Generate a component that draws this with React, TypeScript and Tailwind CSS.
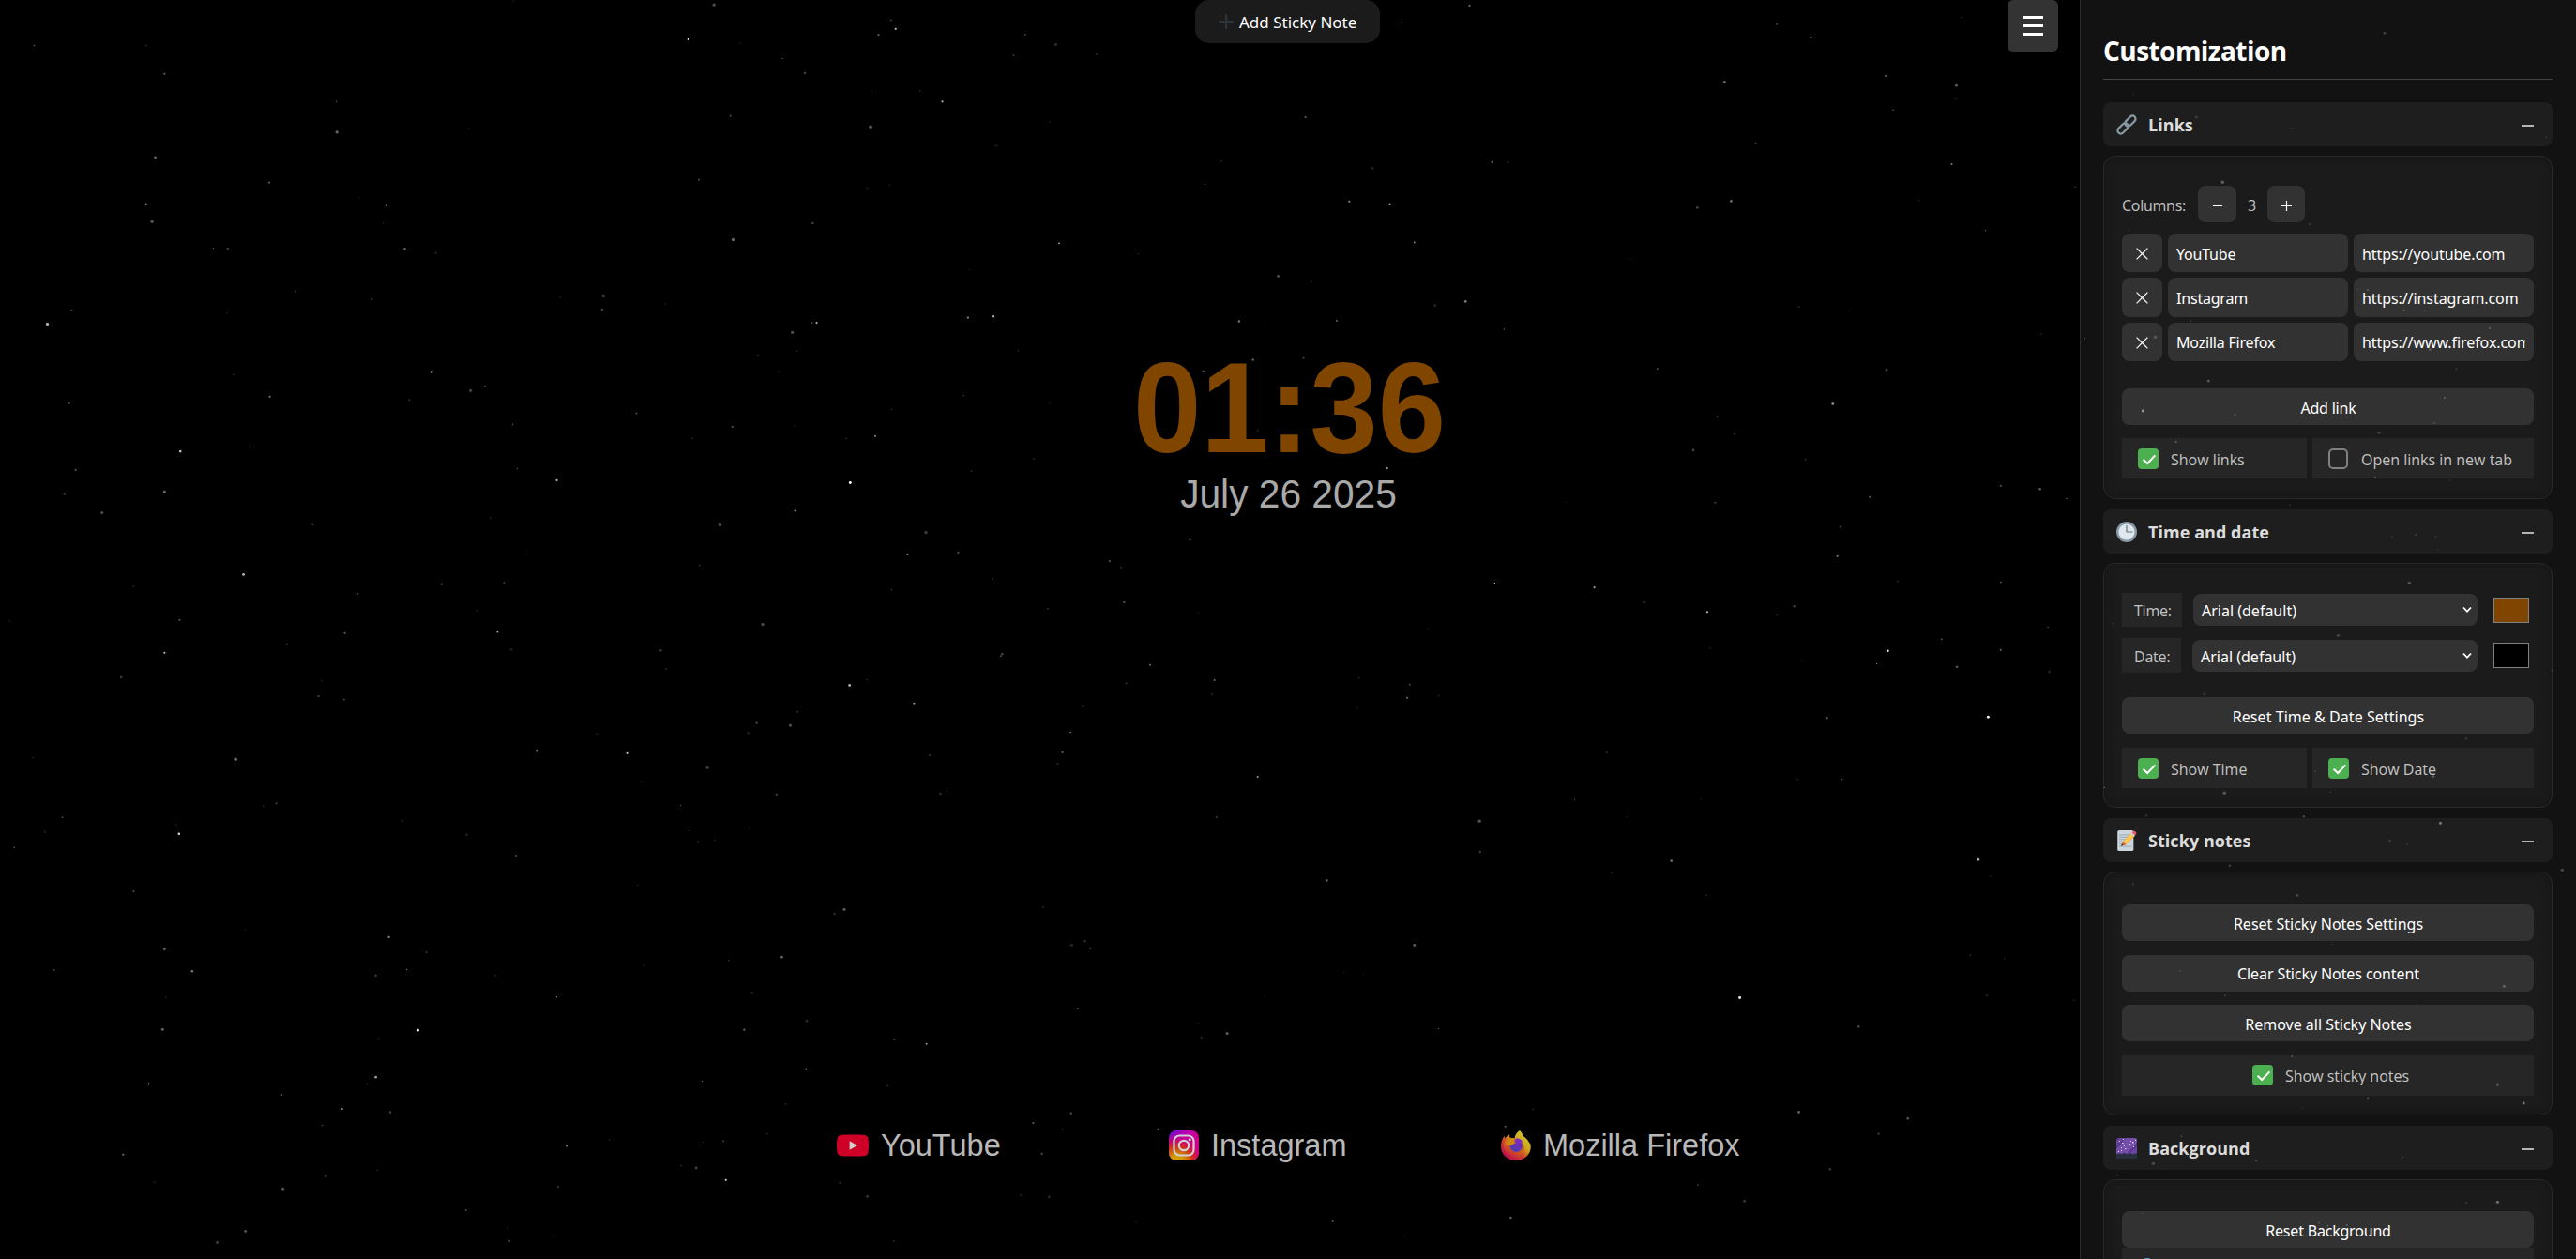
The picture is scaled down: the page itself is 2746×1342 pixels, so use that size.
import type { ReactNode } from "react";

/* ---------- Starfield ---------- */

type Star = [x: number, y: number, size: number, alpha: number];
type Tile = { x: number; y: number; sx: number; sy: number; stars: Star[] };

const TILES: Tile[] = [
  {
    x: 0, y: 0, sx: 0.7015, sy: 0.428,
    stars: [
      [1085, 12, 3, 0.3], [780, 3, 1, 0.3], [1354, 50, 1.5, 0.3], [1361, 72, 2, 0.75], [1335, 87, 2, 0.35], [1558, 86, 1.5, 0.35],
      [1046, 98, 2, 0.9], [1125, 108, 1, 0.3], [1540, 138, 1.5, 0.3], [52, 113, 1.5, 0.35], [222, 113, 1.5, 0.2], [1189, 146, 1, 0.5],
      [250, 184, 2, 0.4], [1223, 182, 2, 0.3], [1325, 225, 1, 0.25], [1398, 226, 1.5, 0.2], [511, 253, 1.5, 0.3], [1432, 253, 2, 0.7],
      [1110, 289, 2, 0.25], [1323, 316, 3, 0.4], [512, 329, 3, 0.4], [713, 321, 1, 0.2], [1514, 363, 3, 0.08], [236, 392, 2.5, 0.4],
      [409, 455, 2, 0.35], [1062, 448, 2, 0.25], [1318, 468, 2, 0.12], [1352, 461, 1.5, 0.15], [546, 493, 1, 0.2], [222, 508, 1.5, 0.55],
      [587, 511, 2, 0.8], [582, 556, 1, 0.35], [231, 552, 3, 0.33], [1235, 556, 2, 0.3], [1114, 597, 3, 0.38], [324, 618, 1, 0.5],
      [346, 619, 2.2, 0.25], [615, 620, 2.5, 0.38], [662, 630, 1.5, 0.22], [1473, 672, 1, 0.2], [449, 726, 2, 0.2], [565, 745, 2, 0.2],
      [917, 737, 3, 0.25], [851, 740, 1.5, 0.14], [915, 771, 2, 0.3], [1011, 757, 1, 0.35], [109, 773, 2, 0.28], [72, 807, 2.8, 0.7],
      [345, 779, 1, 0.25], [1471, 791, 2, 0.55], [1509, 788, 2.6, 0.75], [1241, 804, 2, 0.65], [1234, 804, 2, 0.22], [1204, 828, 3, 0.3],
      [1547, 873, 1, 0.3], [1210, 874, 2, 0.2], [1152, 885, 2.5, 0.1], [656, 926, 3, 0.42], [1185, 925, 1.5, 0.45], [355, 933, 1, 0.4],
      [715, 973, 3, 0.25], [737, 962, 1.8, 0.28], [410, 988, 2, 0.45], [622, 996, 1.5, 0.25], [105, 1004, 2, 0.32], [1464, 985, 1, 0.4],
      [967, 1029, 1.5, 0.4], [1355, 1020, 1, 0.3], [779, 1057, 1.5, 0.28], [1113, 1063, 2, 0.3], [1207, 1060, 1, 0.2], [1330, 1086, 2, 0.5],
      [1052, 1092, 1.2, 0.28], [1286, 1092, 1, 0.3], [380, 1109, 1.2, 0.45], [274, 1124, 2.4, 0.75], [115, 1170, 2, 0.35], [786, 1167, 1.2, 0.3],
      [846, 1196, 2, 0.7], [1476, 1173, 2, 0.13], [1292, 1202, 2.6, 1], [98, 1230, 2.6, 0.16], [250, 1225, 2.6, 0.42], [155, 1277, 2.8, 0.3],
      [1208, 1272, 1.5, 0.55], [746, 1290, 2, 0.12], [475, 1307, 1.2, 0.35], [1094, 1307, 2.8, 0.35], [1407, 1326, 3, 0.24], [800, 1380, 1, 0.35],
      [1379, 1381, 2, 0.5], [1456, 1376, 2, 0.3], [1063, 1408, 1.5, 0.22], [370, 1431, 2.4, 0.75], [203, 1460, 2, 0.12], [671, 1455, 2, 0.3],
      [766, 1451, 1.6, 0.3], [544, 1478, 1.5, 0.28], [1355, 1469, 1, 0.45], [1508, 1441, 1.5, 0.22], [725, 1521, 2, 0.14], [273, 1544, 2, 0.32],
      [1159, 1555, 3, 0.28], [15, 1546, 1, 0.25],
    ],
  },
  {
    x: 0, y: 671, sx: 0.7015, sy: 0.428,
    stars: [
      [524, 9, 2, 0.35], [756, 6, 1.6, 0.7], [436, 37, 2, 0.18], [777, 50, 2.6, 0.13], [1004, 52, 2.4, 0.22], [250, 58, 2, 0.7],
      [1523, 61, 2, 0.35], [1521, 66, 1.6, 0.35], [184, 119, 2.4, 0.22], [489, 127, 1, 0.3], [1012, 98, 1.2, 0.35], [1317, 125, 1, 0.35],
      [1291, 139, 2.6, 0.65], [484, 166, 2, 0.28], [523, 174, 1.5, 0.35], [1389, 184, 2, 0.55], [1212, 205, 1.2, 0.35], [1150, 233, 2, 0.3],
      [1201, 239, 2.6, 0.32], [907, 260, 1, 0.32], [1137, 258, 2.4, 0.12], [816, 302, 2.5, 0.4], [953, 308, 2, 0.75], [1413, 313, 1.5, 0.28],
      [358, 323, 3, 0.45], [50, 319, 1, 0.35], [1075, 344, 3, 0.22], [975, 378, 1.2, 0.35], [1439, 396, 1.2, 0.45], [1429, 409, 2, 0.22],
      [1180, 411, 2, 0.25], [420, 433, 1.8, 0.28], [400, 440, 1.4, 0.2], [1034, 438, 1, 0.45], [95, 468, 1.8, 0.28], [68, 504, 2, 0.14],
      [268, 485, 1, 0.25], [272, 509, 2.2, 0.9], [611, 476, 2, 0.16], [709, 511, 2, 0.18], [1139, 493, 1.5, 0.28], [1047, 501, 1.2, 0.25],
      [1061, 529, 2, 0.14], [1086, 525, 2, 0.1], [22, 543, 1.4, 0.35], [784, 563, 1.8, 0.3], [969, 637, 1.2, 0.22], [203, 652, 1.8, 0.33],
      [1283, 697, 3, 0.33], [1268, 708, 1.8, 0.25], [372, 749, 1, 0.2], [591, 766, 2.1, 0.55], [250, 796, 2.6, 0.36], [648, 804, 2, 0.2],
      [82, 848, 2, 0.25], [292, 851, 2.3, 0.48], [571, 862, 2, 0.28], [618, 847, 1.2, 0.45], [753, 862, 1.2, 0.3], [1188, 816, 2.6, 0.36],
      [1107, 824, 1.4, 0.25], [979, 836, 1.8, 0.13], [846, 915, 1.3, 0.6], [252, 917, 2, 0.1], [1143, 904, 1.6, 0.18], [1226, 975, 2.6, 0.15],
      [247, 996, 2.8, 0.36], [635, 998, 2.6, 0.95], [1131, 997, 2, 0.42], [575, 1020, 2.4, 0.08], [1359, 1021, 2, 0.25], [1408, 1032, 1.8, 0.6],
      [1225, 1095, 1.8, 0.5], [571, 1115, 2.5, 0.6], [558, 1132, 2, 0.1], [226, 1130, 1.2, 0.5], [1067, 1125, 1.1, 0.5], [1349, 1135, 1.8, 0.3],
      [428, 1159, 1.3, 0.45], [1194, 1182, 2, 0.13], [520, 1194, 2, 0.5], [593, 1202, 2.2, 0.25], [490, 1235, 1.5, 0.28], [1166, 1255, 1.3, 0.25],
      [926, 1272, 1.2, 0.2], [1068, 1277, 1, 0.3], [1099, 1274, 2, 0.22], [861, 1286, 2, 0.45], [187, 1308, 2.2, 0.33], [1035, 1335, 1, 0.35],
      [1058, 1341, 2.6, 0.25], [573, 1347, 1, 0.3], [495, 1361, 2.6, 0.28], [1103, 1371, 2, 0.8], [235, 1377, 2.4, 0.08], [1276, 1378, 1.4, 0.28],
      [848, 1388, 1.8, 0.25], [430, 1393, 2.6, 0.33], [1318, 1412, 2.4, 0.22], [1551, 1409, 1.4, 0.25], [708, 1446, 1.8, 0.3], [373, 1499, 2.6, 0.33],
      [771, 1491, 1.8, 0.13], [841, 1508, 1, 0.2], [330, 1527, 2.6, 0.25], [774, 1523, 1.8, 0.3], [1358, 1523, 1.2, 0.35],
    ],
  },
  {
    x: 1100, y: 0, sx: 0.7079, sy: 0.428,
    stars: [
      [659, 14, 2, 0.4], [557, 56, 1.2, 0.4], [1122, 60, 1.6, 0.32], [1173, 93, 2, 0.4], [1400, 43, 1, 0.32], [36, 111, 2.4, 0.22],
      [97, 135, 2, 0.14], [1043, 204, 2.5, 0.4], [1286, 189, 2, 0.4], [1392, 213, 2.6, 0.35], [1391, 245, 2, 0.12], [1297, 274, 1.3, 0.4],
      [412, 292, 1.8, 0.38], [27, 304, 1, 0.28], [1090, 356, 1.6, 0.28], [285, 401, 1.2, 0.28], [693, 404, 2, 0.35], [717, 404, 1.8, 0.25],
      [1385, 409, 1.9, 0.5], [513, 419, 2.5, 0.15], [261, 459, 1.2, 0.32], [478, 502, 2, 0.5], [539, 508, 1.8, 0.6], [1053, 501, 2.5, 0.42],
      [1002, 517, 2.5, 0.25], [1335, 499, 1, 0.28], [1436, 574, 1.2, 0.4], [41, 606, 1.4, 0.85], [576, 604, 1.7, 0.5], [160, 632, 1, 0.3],
      [899, 644, 1.2, 0.48], [371, 688, 2.5, 0.32], [421, 701, 1.5, 0.28], [653, 751, 2.5, 0.48], [607, 761, 2, 0.22], [1155, 764, 1.7, 0.16],
      [1229, 774, 1, 0.25], [312, 800, 2.2, 0.45], [459, 799, 2, 0.32], [351, 811, 1, 0.3], [711, 820, 1.4, 0.38], [1520, 831, 1.1, 0.32],
      [409, 892, 1.7, 0.28], [333, 896, 2.3, 0.36], [258, 925, 2, 0.4], [942, 918, 1.8, 0.3], [1287, 921, 2.4, 0.25], [27, 1003, 1, 0.3],
      [1206, 1006, 2.6, 0.5], [1032, 1038, 1.8, 0.25], [340, 1072, 1.8, 0.14], [1058, 1081, 1, 0.5], [996, 1121, 2.4, 0.28], [3, 1142, 2, 0.13],
      [1165, 1144, 1.2, 0.3], [535, 1166, 2, 0.6], [1459, 1210, 2, 0.28], [1518, 1218, 2.2, 0.38], [1262, 1238, 2, 0.36], [1029, 1252, 1.8, 0.28],
      [1558, 1242, 1, 0.35], [804, 1252, 1, 0.2], [1217, 1312, 1.5, 0.3], [238, 1344, 2.4, 0.18], [1213, 1385, 2, 0.48], [117, 1397, 2, 0.3],
      [134, 1413, 1.8, 0.18], [212, 1417, 1, 0.15], [697, 1452, 1.3, 0.7], [847, 1463, 2, 0.6], [1459, 1450, 1.6, 0.35], [1304, 1448, 1.4, 0.22],
      [139, 1500, 2, 0.36], [922, 1500, 2, 0.36], [24, 1516, 1.4, 0.25], [250, 1526, 1.2, 0.2], [1017, 1524, 2, 0.7], [1148, 1510, 2.2, 0.25],
      [1122, 1532, 1, 0.4], [1530, 1562, 1.1, 0.45], [597, 1566, 1.2, 0.2],
    ],
  },
  {
    x: 1100, y: 671, sx: 0.7079, sy: 0.428,
    stars: [
      [1289, 53, 2.2, 0.9], [1370, 24, 1.6, 0.35], [1459, 51, 2, 0.36], [1393, 93, 2.4, 0.33], [1532, 105, 2, 0.2], [1272, 85, 1, 0.5],
      [1159, 77, 1.6, 0.13], [1021, 46, 1.8, 0.12], [178, 88, 1.7, 0.48], [275, 126, 2, 0.36], [142, 134, 1.6, 0.25], [271, 161, 2, 0.14],
      [492, 121, 1, 0.4], [569, 137, 1.6, 0.32], [565, 170, 2, 0.38], [613, 164, 1, 0.35], [77, 191, 2, 0.18], [490, 195, 1.2, 0.15],
      [1197, 220, 2.5, 0.28], [1440, 218, 2.6, 0.95], [58, 256, 1.3, 0.6], [46, 306, 2, 0.36], [39, 334, 1.8, 0.18], [866, 306, 1.5, 0.28],
      [340, 367, 2, 0.55], [1153, 373, 1, 0.3], [1220, 373, 1.3, 0.38], [817, 424, 1.2, 0.32], [1007, 422, 1.2, 0.15], [278, 467, 2, 0.2],
      [674, 477, 3, 0.33], [896, 466, 1, 0.22], [675, 554, 2.4, 0.2], [963, 576, 2.5, 0.42], [1425, 573, 2.6, 0.65], [444, 625, 2.5, 0.35],
      [873, 605, 1.7, 0.15], [1443, 614, 1.8, 0.1], [1015, 661, 1.8, 0.14], [17, 691, 1.8, 0.15], [80, 776, 2.2, 0.18], [60, 786, 2.5, 0.18],
      [88, 794, 2, 0.18], [576, 786, 2.5, 0.38], [1413, 811, 1, 0.4], [1464, 819, 1, 0.3], [470, 854, 1, 0.2], [499, 859, 1, 0.14],
      [1066, 917, 2.6, 0.95], [1438, 912, 1, 0.45], [69, 944, 1.7, 0.32], [350, 912, 1.2, 0.14], [250, 981, 1.5, 0.15], [294, 1006, 3, 0.33],
      [255, 1016, 2, 0.18], [612, 994, 1, 0.5], [1245, 989, 2, 0.38], [755, 1195, 1.3, 0.22], [1155, 1202, 2.5, 0.4], [1319, 1218, 2.4, 0.33],
      [59, 1205, 2, 0.32], [2, 1229, 2, 0.35], [46, 1245, 1.2, 0.28], [190, 1245, 2, 0.36], [713, 1238, 2, 0.32], [1275, 1256, 2, 0.28],
      [15, 1306, 2, 0.3], [1202, 1344, 2.4, 0.22], [1003, 1383, 1.8, 0.22], [26, 1413, 2.2, 0.18], [1073, 1424, 2.5, 0.22], [721, 1465, 2.3, 0.36],
      [453, 1473, 2.3, 0.42], [157, 1476, 1, 0.28], [561, 1511, 1, 0.22],
    ],
  },
  {
    x: 2200, y: 0, sx: 0.3482, sy: 0.3333,
    stars: [
      [982, 106, 2.4, 0.22], [213, 301, 1, 0.15], [406, 375, 2.6, 0.14], [699, 409, 1, 0.2], [1477, 439, 1.2, 0.25], [486, 583, 3.2, 0.3],
      [35, 598, 1.2, 0.4], [755, 717, 2.4, 0.2], [199, 736, 1, 0.25], [356, 420, 2, 0.2],
    ],
  },
  {
    x: 2200, y: 270, sx: 0.3482, sy: 0.3333,
    stars: [
      [930, 117, 2, 0.2], [900, 115, 1, 0.2], [1042, 183, 2, 0.26], [1106, 184, 2, 0.13], [389, 216, 1.4, 0.22], [1304, 240, 2, 0.2],
      [64, 272, 1.6, 0.25], [280, 268, 3, 0.2], [1121, 308, 2.6, 0.18], [1202, 370, 2.4, 0.08], [443, 408, 2.8, 0.25], [242, 504, 2.6, 0.5],
      [1166, 462, 2, 0.22], [525, 516, 2, 0.16], [1135, 543, 2.4, 0.1], [965, 574, 2.4, 0.2], [344, 603, 1.8, 0.28], [953, 717, 1.8, 0.28],
      [1183, 726, 1.8, 0.08], [692, 806, 2, 0.1], [9, 784, 1, 0.4],
    ],
  },
  {
    x: 2200, y: 540, sx: 0.3482, sy: 0.3333,
    stars: [
      [1005, 96, 2, 0.1], [1077, 90, 2, 0.12], [1139, 96, 2, 0.13], [1146, 138, 2, 0.06], [1058, 244, 3, 0.25], [151, 373, 1, 0.25],
      [840, 412, 2.8, 0.18], [430, 600, 2.6, 0.12], [447, 505, 2, 0.1], [1232, 742, 2.4, 0.12], [770, 847, 2, 0.1], [1132, 863, 2, 0.3],
      [492, 916, 3.2, 0.25], [817, 913, 1, 0.3], [1494, 523, 1, 0.4], [124, 898, 1.2, 0.45],
    ],
  },
  {
    x: 2200, y: 860, sx: 0.3482, sy: 0.3333,
    stars: [
      [1153, 52, 2.8, 0.38], [735, 31, 2.2, 0.22], [253, 28, 2.2, 0.12], [998, 109, 2.4, 0.14], [1051, 120, 2, 0.1], [508, 188, 2.2, 0.2],
      [1526, 202, 3, 0.22], [212, 247, 1.6, 0.2], [715, 283, 2.4, 0.2], [819, 439, 1.2, 0.16], [356, 525, 2, 0.1], [1348, 574, 3, 0.22],
      [494, 604, 2, 0.16], [1083, 631, 1.4, 0.1], [699, 798, 1.5, 0.3], [1328, 889, 3, 0.22], [931, 931, 1.3, 0.4], [1408, 948, 2.6, 0.4],
      [730, 964, 1, 0.2], [32, 619, 1, 0.35],
    ],
  },
  {
    x: 2200, y: 1180, sx: 0.3482, sy: 0.3333,
    stars: [
      [360, 94, 1.2, 0.35], [274, 181, 3, 0.2], [589, 171, 2.2, 0.2], [1038, 160, 1.2, 0.25], [165, 217, 1.2, 0.2], [1232, 306, 2.2, 0.1],
      [1328, 304, 3, 0.35], [243, 340, 2, 0.08], [781, 371, 2, 0.15], [808, 380, 1.5, 0.25], [867, 378, 2, 0.2],
    ],
  },
];

function Starfield() {
  return (
    <svg className="pointer-events-none absolute inset-0" width="2746" height="1342" viewBox="0 0 2746 1342" aria-hidden="true">
      {TILES.map((t, i) =>
        t.stars.map(([x, y, s, a], j) => (
          <circle key={i + "-" + j} cx={t.x + x * t.sx} cy={t.y + y * t.sy} r={s * 0.56} fill="#fff" fillOpacity={a} />
        )),
      )}
    </svg>
  );
}

/* ---------- Icons ---------- */

function LinkIcon() {
  return (
    <svg className="h-[22px] w-[22px]" viewBox="0 0 22 22" fill="none" stroke="#8899a6" strokeWidth="2.200">
      <rect x="-6.600" y="-3.300" width="13.200" height="6.600" rx="3.300" transform="translate(7.1 14.9) rotate(-45)" />
      <rect x="-6.600" y="-3.300" width="13.200" height="6.600" rx="3.300" transform="translate(14.9 7.1) rotate(-45)" />
    </svg>
  );
}

function ClockIcon() {
  return (
    <svg className="h-[22px] w-[22px]" viewBox="0 0 36 36">
      <circle cx="18" cy="18" r="18" fill="#8899a6" />
      <circle cx="18" cy="18" r="14" fill="#e1e8ed" />
      <path d="M18 7v11h10" fill="none" stroke="#66757f" strokeWidth="2" strokeLinecap="round" strokeLinejoin="round" />
    </svg>
  );
}

function MemoIcon() {
  return (
    <svg className="h-[22px] w-[22px]" viewBox="0 0 36 36">
      <rect x="2" y="0" width="28" height="36" rx="3" fill="#ccd6dd" />
      <path d="M5 8h20M5 12h17M5 16h13M5 20h10M5 24h9M5 28h22" stroke="#99aab5" strokeWidth="1.600" />
      <path d="M8.500 27.500l3-8L26.500 4.500l5.500 5.500L17 25z" fill="#ffac33" />
      <path d="M10.500 22l15-15 3.500 3.500-14.500 14.500z" fill="#ffcc4d" />
      <path d="M8.500 27.500l3-8 5.500 5.500z" fill="#c1694f" />
      <path d="M8.500 27.500l1.300-3.600 2.400 2.400z" fill="#292f33" />
      <path d="M25 6l2.500-2.500 5.500 5.500-2.500 2.500z" fill="#ccd6dd" />
      <path d="M27.200 3.800l2-2c1-1 2.500-1 3.500 0l1.500 1.500c1 1 1 2.500 0 3.500l-2 2z" fill="#ea596e" />
    </svg>
  );
}

function GalaxyIcon() {
  return (
    <svg className="h-[22px] w-[22px]" viewBox="0 0 22 22">
      <rect width="22" height="22" rx="2.200" fill="#553788" />
      <path d="M10 0h10q2 0 2 2v3L11 17H0v-5z" fill="#744eaa" />
      <path d="M4 0h5L0 8V3z" fill="#6a45a0" />
      <path d="M22 9v8h-9z" fill="#6a45a0" />
      <g fill="#e6d8f5">
        <rect x="7" y="1" width="1" height="1" /><rect x="3" y="3" width="1" height="1" /><rect x="6" y="5" width="1.500" height="1" />
        <rect x="12" y="7" width="1.500" height="1" /><rect x="14" y="6" width="1" height="1" /><rect x="17" y="4" width="1.500" height="1.500" />
        <rect x="20" y="2" width="1" height="1" /><rect x="15" y="3" width="1" height="1" /><rect x="5" y="13" width="1" height="1" />
        <rect x="2" y="14" width="1" height="1" /><rect x="18" y="9" width="1" height="1" /><rect x="13" y="10" width="1" height="1" />
        <rect x="8" y="8" width="1" height="1" /><rect x="5" y="10" width="1" height="1" /><rect x="9" y="11" width="1.500" height="1" />
      </g>
      <path d="M0 17.500l3-1.300 2.500 1 3-1.500 3 1.800 3.500-1.300 3 1 4-1.200v3.800q0 2.200-2.200 2.200H2.200Q0 22 0 19.800z" fill="#292f3f" />
    </svg>
  );
}

function YouTubeIcon() {
  return (
    <svg className="h-[24px] w-[34px]" viewBox="0 0 34 24">
      <path d="M17 .5c-5 0-10.500.1-13 .6C1.900 1.500.9 2.700.6 4.500.2 6.700 0 9 0 12s.2 5.300.6 7.500c.3 1.800 1.300 3 3.400 3.400 2.500.5 8 .6 13 .6s10.500-.1 13-.6c2.100-.4 3.100-1.600 3.400-3.400.4-2.200.6-4.500.6-7.500s-.2-5.300-.6-7.500c-.3-1.800-1.300-3-3.400-3.400-2.500-.5-8-.6-13-.6z" fill="#cf0027" />
      <path d="M13.600 7.200v9.600l8.400-4.800z" fill="#d0d0d0" />
    </svg>
  );
}

function InstagramIcon() {
  return (
    <svg className="h-8 w-8" viewBox="0 0 32 32">
      <defs>
        <linearGradient id="igBase" x1="0" y1="0" x2="1" y2="0.300">
          <stop offset="0" stopColor="#5a17d0" /><stop offset="0.450" stopColor="#b300b8" /><stop offset="1" stopColor="#cf0088" />
        </linearGradient>
        <radialGradient id="igWarm" cx="0.270" cy="1.080" r="1">
          <stop offset="0" stopColor="#d0ac00" /><stop offset="0.250" stopColor="#d09a00" /><stop offset="0.550" stopColor="#d0301e" /><stop offset="0.780" stopColor="#cf0078" stopOpacity="0.800" /><stop offset="1" stopColor="#cf0090" stopOpacity="0" />
        </radialGradient>
      </defs>
      <rect width="32" height="32" rx="8" fill="url(#igBase)" />
      <rect width="32" height="32" rx="8" fill="url(#igWarm)" />
      <rect x="5.500" y="5.500" width="21" height="21" rx="6" fill="none" stroke="#d3d0d3" strokeWidth="2.200" />
      <circle cx="16" cy="16" r="5.200" fill="none" stroke="#d3d0d3" strokeWidth="2.200" />
      <circle cx="22.200" cy="9.800" r="1.500" fill="#d3d0d3" />
    </svg>
  );
}

function FirefoxIcon() {
  return (
    <svg className="h-8 w-8" viewBox="0 0 32 32">
      <defs>
        <linearGradient id="ffBody" x1="0.850" y1="0.150" x2="0.200" y2="0.950">
          <stop offset="0" stopColor="#d0c232" /><stop offset="0.350" stopColor="#d0a21e" /><stop offset="0.600" stopColor="#d0442c" /><stop offset="1" stopColor="#b80a50" />
        </linearGradient>
        <radialGradient id="ffGlobe" cx="0.600" cy="0.300" r="0.800">
          <stop offset="0" stopColor="#7a28b8" /><stop offset="1" stopColor="#4840b0" />
        </radialGradient>
        <linearGradient id="ffFox" x1="0.800" y1="0" x2="0.200" y2="1">
          <stop offset="0" stopColor="#d09a10" /><stop offset="0.500" stopColor="#d0601c" /><stop offset="1" stopColor="#c81848" />
        </linearGradient>
      </defs>
      <path d="M20 0c2 2 3.200 4 3.700 6 3.200 2 6 5 7 8.500.2-.6.100-1.700-.1-2.500C31.700 14.500 32 17 31.600 19.500 30.400 26.800 24 32 16 32 7 32 0 25.500 0 17c0-4 1.200-8 3.700-11.500-.1 1 0 2.200.4 3C5.500 6.700 7.600 5 9.500 4.300 9 5.400 9 6.800 9.300 7.700c1.200-.1 2.700.1 3.700.6l1.500.7c.2-3.700 2.200-7.200 5.500-9z" fill="url(#ffBody)" />
      <path d="M11.500 9.200c2.300-1.400 5.500-1 7.500.6 3 1.500 5.500 4 5.800 7.200 1.800 5-1.800 11-8 11.500C8.500 27 3 22.500 2.700 16.500c0-4 2.600-8.800 6.600-8.800.8.500 1.700.8 2.200 1.500z" fill="url(#ffFox)" />
      <circle cx="16.300" cy="16.200" r="6.700" fill="url(#ffGlobe)" />
      <path d="M13 11.500c.5-2 3-3.700 6-2.800 2.400.6 4 2.600 4 2.600l-3 2z" fill="#7a2cc0" />
      <path d="M9.300 7.700c1.200-.1 2.700.1 3.700.6l3 1.700c-2.500.3-2 2.500.2 2.800-.6 1-2.900 1.300-3.400 2-1 1.200-3.500 1.500-5.500 1-1.200-.3-2-.8-2.500-1.500 1.200-3 2.100-5.100 4.500-6.600z" fill="#cf860e" />
    </svg>
  );
}

function PlusIcon() {
  return (
    <svg className="h-4 w-4" viewBox="0 0 16 16" fill="none" stroke="#2e343a" strokeWidth="2.200" strokeLinecap="round">
      <path d="M8 1v14M1 8h14" />
    </svg>
  );
}

/* ---------- Sidebar controls ---------- */

const label = "font-['Open_Sans',sans-serif] text-[16px] leading-6 text-[#c4c4c4] whitespace-nowrap";
const field = "rounded-[8px] bg-[#323232] font-['Noto_Sans',sans-serif] text-[16px] leading-6 text-white whitespace-nowrap";

function Button({ children, tracking = "" }: { children: ReactNode; tracking?: string }) {
  return <button className={`${field} ${tracking} flex h-[39px] w-full shrink-0 items-center justify-center pt-[2px] pl-px`}>{children}</button>;
}

function Check({ text, checked = true, className = "justify-start pl-[17px]" }: { text: string; checked?: boolean; className?: string }) {
  return (
    <div className={`flex h-[43px] shrink-0 items-center gap-[13px] bg-[#262626] ${className}`}>
      {checked ? (
        <svg className="h-[22px] w-[22px] shrink-0" viewBox="0 0 22 22">
          <rect width="22" height="22" rx="4" fill="#4caf50" />
          <path d="M5.600 11.700l4.600 4.300 8.200-8.600" fill="none" stroke="#fff" strokeWidth="2" />
        </svg>
      ) : (
        <span className="mr-px h-[22px] w-[21px] shrink-0 rounded-[5px] border-2 border-[#808080]" />
      )}
      <span className={`${label} pt-[2px]`}>{text}</span>
    </div>
  );
}

function Section({ icon, title, panel, children }: { icon: ReactNode; title: string; panel: string; children: ReactNode }) {
  return (
    <section className="flex shrink-0 flex-col gap-[10px]">
      <div className="flex h-[47px] items-center rounded-[8px] bg-[#1e1e1e] pr-[20px] pl-[14px]">
        {icon}
        <h3 className="ml-3 flex-1 pt-[2px] font-['Open_Sans',sans-serif] text-[18px] font-bold tracking-[0.05px] text-[#dcdcdc]">{title}</h3>
        <span className="mt-[2px] h-[2px] w-[13px] bg-[#b4b4b4]" />
      </div>
      <div className={`flex flex-col rounded-[13px] border border-[#292929] bg-[#1b1b1b] px-[19px] shadow-[inset_0_0_12px_rgba(0,0,0,0.25)] ${panel}`}>
        {children}
      </div>
    </section>
  );
}

function LinkRow({ name, url }: { name: string; url: string }) {
  return (
    <>
      <button className={`${field} flex items-center justify-center pt-[2px]`}>
        <svg className="h-[13px] w-[13px]" viewBox="0 0 13 13" fill="none" stroke="#f0f0f0" strokeWidth="1.300">
          <path d="M.6.6l11.800 11.800M12.400.6L.6 12.400" />
        </svg>
      </button>
      <div className={`${field} flex items-center px-[9px] pt-[2px] tracking-[-0.2px]`}>{name}</div>
      <div className={`${field} flex min-w-0 items-center px-[9px] pt-[2px] tracking-[-0.08px]`}>
        <span className="overflow-hidden">{url}</span>
      </div>
    </>
  );
}

function FontRow({ text, swatch, row, box, select }: { text: string; swatch: string; row: string; box: string; select: string }) {
  return (
    <div className={`flex items-center ${row}`}>
      <span className={`${label} flex h-full items-center bg-[#262626] pt-[2px] pl-[13px] tracking-[-0.2px] ${box}`}>{text}</span>
      <div className={`${field} flex h-[34px] flex-1 items-center justify-between pr-[6px] pl-[9px] ${select}`}>
        <span className="pt-[2px]">Arial (default)</span>
        <svg className="h-[8px] w-[10px]" viewBox="0 0 10 8" fill="none" stroke="#fff" strokeWidth="1.800">
          <path d="M1 1.500l4 4.300 4-4.300" />
        </svg>
      </div>
      <span className={`mr-[5px] ml-[17px] h-[27px] w-[38px] border border-[#808080] ${swatch}`} />
    </div>
  );
}

function Sidebar() {
  return (
    <aside className="col-start-1 row-start-1 flex h-[1342px] w-[529px] flex-col justify-self-end overflow-hidden border-l border-[#2c2c2c] bg-[#121212] pt-[34px] pr-[25px] pl-[24px]">
      <h2 className="mb-6 shrink-0 border-b border-[#444] pb-[10px] font-['Open_Sans',sans-serif] text-[28px] leading-[40px] font-bold tracking-[-0.55px] text-white">
        Customization
      </h2>
      <div className="flex shrink-0 flex-col gap-[11px]">
        <Section icon={<LinkIcon />} title="Links" panel="h-[366px] pt-[31px]">
          <div className="flex h-[39px] items-center">
            <span className={`${label} w-[81px] pt-[2px] tracking-[-0.25px]`}>Columns:</span>
            <button className={`${field} flex h-[39px] w-[41px] items-center justify-center`}>
              <span className="mt-[3px] h-px w-[10px] bg-white" />
            </button>
            <span className={`${label} w-[33px] pt-[2px] text-center`}>3</span>
            <button className={`${field} flex h-[39px] w-[40px] items-center justify-center`}>
              <svg className="mt-[3px] h-[11px] w-[11px]" viewBox="0 0 11 11" stroke="#fff" strokeWidth="1.200">
                <path d="M5.500 0v11M0 5.500h11" />
              </svg>
            </button>
          </div>
          <div className="mt-3 grid h-[136px] grid-cols-[43px_192px_192px] grid-rows-3 gap-[6px]">
            <LinkRow name="YouTube" url="https://youtube.com" />
            <LinkRow name="Instagram" url="https://instagram.com" />
            <LinkRow name="Mozilla Firefox" url="https://www.firefox.com" />
          </div>
          <div className="mt-[29px] mb-[14px]">
            <Button tracking="tracking-[-0.2px]">Add link</Button>
          </div>
          <div className="grid grid-cols-[197px_236px] gap-[6px]">
            <Check text="Show links" />
            <Check text="Open links in new tab" checked={false} />
          </div>
        </Section>

        <Section icon={<ClockIcon />} title="Time and date" panel="h-[261px] pt-[31px]">
          <FontRow text="Time:" swatch="bg-[#804600]" row="h-[36px]" box="w-[64px]" select="ml-[12px]" />
          <FontRow text="Date:" swatch="bg-black" row="mt-3 h-[37px]" box="w-[63px]" select="ml-[12px]" />
          <div className="mt-[26px] mb-[15px]">
            <Button tracking="tracking-[0.05px]">Reset Time &amp; Date Settings</Button>
          </div>
          <div className="grid grid-cols-[197px_236px] gap-[6px]">
            <Check text="Show Time" />
            <Check text="Show Date" />
          </div>
        </Section>

        <Section icon={<MemoIcon />} title="Sticky notes" panel="h-[260px] gap-[14.6px] pt-[34px]">
          <Button>Reset Sticky Notes Settings</Button>
          <Button tracking="tracking-[-0.1px]">Clear Sticky Notes content</Button>
          <Button>Remove all Sticky Notes</Button>
          <Check text="Show sticky notes" className="justify-center pl-[6px]" />
        </Section>

        <Section icon={<GalaxyIcon />} title="Background" panel="h-[300px] pt-[33px]">
          <Button tracking="tracking-[-0.2px]">Reset Background</Button>
          <div className="h-[60px] shrink-0 bg-[#262626] pt-[11px] pl-[23px]">
            <span className="block h-3 w-[8px] rounded-t-[3px] bg-[#4a9cc4]" />
          </div>
        </Section>
      </div>
    </aside>
  );
}

/* ---------- Page ---------- */

const linkText = "ml-[13px] text-[32.5px] leading-[36px] text-[#b8b8b8]";

export default function App() {
  return (
    <div className="relative grid h-[1342px] w-[2746px] grid-cols-1 grid-rows-1 overflow-hidden bg-black">
      <main className="col-start-1 row-start-1 flex h-[1342px] flex-col font-['Liberation_Sans',Arial,sans-serif]">
        <header className="grid h-[55px] grid-cols-[1fr_auto_1fr] items-start pr-px">
          <button className="col-start-2 flex h-[46px] w-[197px] items-center gap-[6px] rounded-[15px] bg-[#1b1b1b] pl-[25px] font-['Noto_Sans',sans-serif] text-[17px] whitespace-nowrap text-white">
            <PlusIcon />
            <span className="pt-px">Add Sticky Note</span>
          </button>
          <button className="mr-[551px] flex h-[55px] w-[54px] flex-col items-center gap-[6px] justify-self-end rounded-[6px] bg-[#333] pt-[17px]">
            <span className="h-[3px] w-[22px] bg-white" />
            <span className="h-[3px] w-[22px] bg-white" />
            <span className="h-[3px] w-[22px] bg-white" />
          </button>
        </header>

        <div className="mt-[316px] h-[132px] origin-[50%_84.2%] scale-y-[1.055] pl-[3px] text-center text-[130.3px] leading-[132px] font-bold text-[#804600]">01:36</div>
        <div className="h-12 origin-[50%_80%] scale-y-[1.05] pl-px text-center text-[40.7px] leading-[48px] text-[#a9a9a9]">July 26 2025</div>

        <nav className="mt-auto mb-[103px] flex h-[36px] items-center pl-[892px]">
          <a className="flex w-[354px] items-center">
            <YouTubeIcon />
            <span className={linkText}>YouTube</span>
          </a>
          <a className="flex w-[354px] items-center">
            <InstagramIcon />
            <span className={linkText}>Instagram</span>
          </a>
          <a className="flex items-center whitespace-nowrap">
            <FirefoxIcon />
            <span className={linkText}>Mozilla Firefox</span>
          </a>
        </nav>
      </main>
      <Sidebar />
      <Starfield />
    </div>
  );
}
